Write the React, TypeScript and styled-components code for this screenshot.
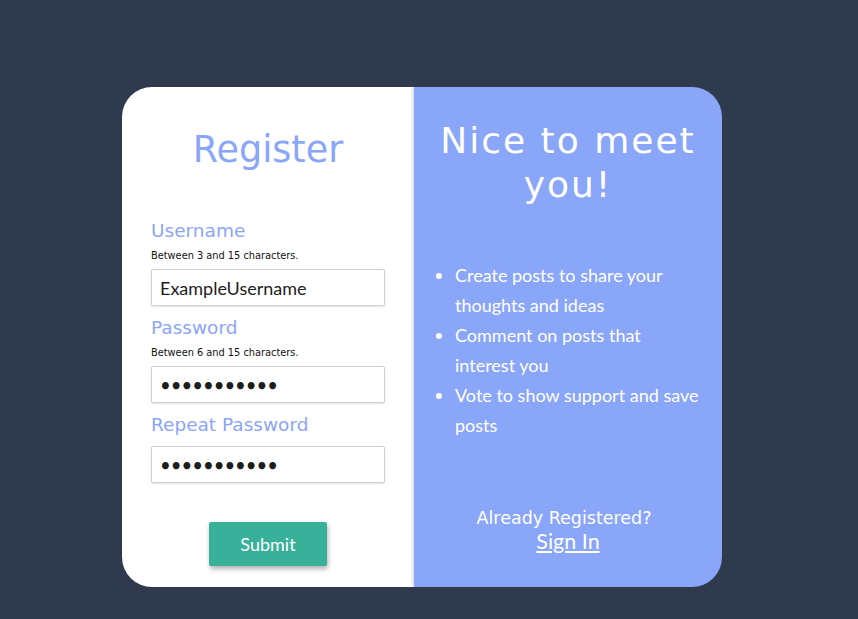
import React from "react";
import styled, { createGlobalStyle } from "styled-components";

const Global = createGlobalStyle`
  html, body { margin: 0; padding: 0; }
  body {
    background: #2f3a4e;
    font-family: "Lato", "Liberation Sans", sans-serif;
  }
`;

const Page = styled.div`
  min-height: 619px;
  box-sizing: border-box;
  display: flex;
  justify-content: center;
  align-items: flex-start;
  padding: 87px 14px 0 0;
`;

const Card = styled.div`
  width: 600px;
  height: 500px;
  display: flex;
  border-radius: 30px;
  overflow: hidden;
`;

const FormPanel = styled.form`
  width: 292px;
  flex: none;
  background: #ffffff;
  box-sizing: border-box;
  padding: 38px 29px 0 29px;
  display: flex;
  flex-direction: column;
`;

const Title = styled.h1`
  margin: 0 0 45px;
  text-align: center;
  font-family: "DejaVu Sans", sans-serif;
  font-weight: normal;
  font-size: 36.5px;
  line-height: 50px;
  color: #8aa6f8;
`;

const Label = styled.label<{ $below?: number }>`
  font-family: "DejaVu Sans", sans-serif;
  font-size: 18.5px;
  line-height: 22px;
  color: #8aa6f8;
  display: block;
  margin-bottom: ${(p) => p.$below ?? 7}px;
`;

const Hint = styled.div`
  font-family: "DejaVu Sans", sans-serif;
  font-size: 9.8px;
  line-height: 14px;
  color: #111;
  margin: 0 0 6px;
`;

const Field = styled.div<{ $gap?: number }>`
  display: flex;
  flex-direction: column;
  margin-bottom: ${(p) => p.$gap ?? 11}px;
`;

const Input = styled.input<{ $dots?: boolean }>`
  width: 234px;
  height: 37px;
  box-sizing: border-box;
  border: 1px solid #cfcfd6;
  border-radius: 2px;
  box-shadow: 0 1px 2px rgba(0, 0, 0, 0.12);
  padding: 0 8px;
  font-family: "Lato", sans-serif;
  font-size: ${(p) => (p.$dots ? "18.5px" : "18px")};
  letter-spacing: 0;
  color: #1d1d1d;
  background: #fff;
  outline: none;
`;

const ButtonRow = styled.div`
  display: flex;
  justify-content: center;
  margin-top: 39px;
`;

const Submit = styled.button`
  width: 118px;
  height: 44px;
  border: none;
  border-radius: 2px;
  background: #38b09a;
  color: #ffffff;
  font-family: "Lato", sans-serif;
  font-size: 18px;
  box-shadow: 1px 3px 5px rgba(0, 0, 0, 0.3);
  cursor: pointer;
`;

const InfoPanel = styled.div`
  flex: 1;
  background: #8aa6f8;
  box-shadow: -1px 0 3px rgba(0, 0, 0, 0.2);
  display: flex;
  flex-direction: column;
  align-items: center;
  padding: 32px 20px 0 20px;
  color: #ffffff;
`;

const Greeting = styled.h2`
  margin: 0;
  text-align: center;
  font-family: "DejaVu Sans", sans-serif;
  font-weight: normal;
  font-size: 36px;
  line-height: 44px;
  letter-spacing: 2px;
`;

const Perks = styled.ul`
  margin: 53px 0 0;
  padding: 0 0 0 21px;
  align-self: stretch;
  font-family: "Lato", sans-serif;
  font-size: 18px;
  line-height: 30px;
`;

const Perk = styled.li``;

const Footer = styled.div`
  margin-top: 66px;
  display: flex;
  flex-direction: column;
  align-items: center;
  margin-left: -8px;
`;

const Already = styled.div`
  font-family: "DejaVu Sans", sans-serif;
  font-size: 17.5px;
  line-height: 24px;
`;

const SignIn = styled.a`
  font-family: "Lato", sans-serif;
  font-size: 21.5px;
  line-height: 22px;
  color: #ffffff;
  text-decoration: underline;
  font-weight: normal;
  margin-left: 8px;
`;

export default function App() {
  return (
    <>
      <Global />
      <Page>
        <Card>
          <FormPanel onSubmit={(e) => e.preventDefault()}>
            <Title>Register</Title>
            <Field>
              <Label>Username</Label>
              <Hint>Between 3 and 15 characters.</Hint>
              <Input defaultValue="ExampleUsername" />
            </Field>
            <Field>
              <Label>Password</Label>
              <Hint>Between 6 and 15 characters.</Hint>
              <Input $dots type="password" defaultValue="12345678901" />
            </Field>
            <Field $gap={0}>
              <Label $below={10}>Repeat Password</Label>
              <Input $dots type="password" defaultValue="12345678901" />
            </Field>
            <ButtonRow>
              <Submit type="submit">Submit</Submit>
            </ButtonRow>
          </FormPanel>
          <InfoPanel>
            <Greeting>
              Nice to meet
              <br />
              you!
            </Greeting>
            <Perks>
              <Perk>Create posts to share your thoughts and ideas</Perk>
              <Perk>Comment on posts that interest you</Perk>
              <Perk>Vote to show support and save posts</Perk>
            </Perks>
            <Footer>
              <Already>Already Registered?</Already>
              <SignIn href="#">Sign In</SignIn>
            </Footer>
          </InfoPanel>
        </Card>
      </Page>
    </>
  );
}
